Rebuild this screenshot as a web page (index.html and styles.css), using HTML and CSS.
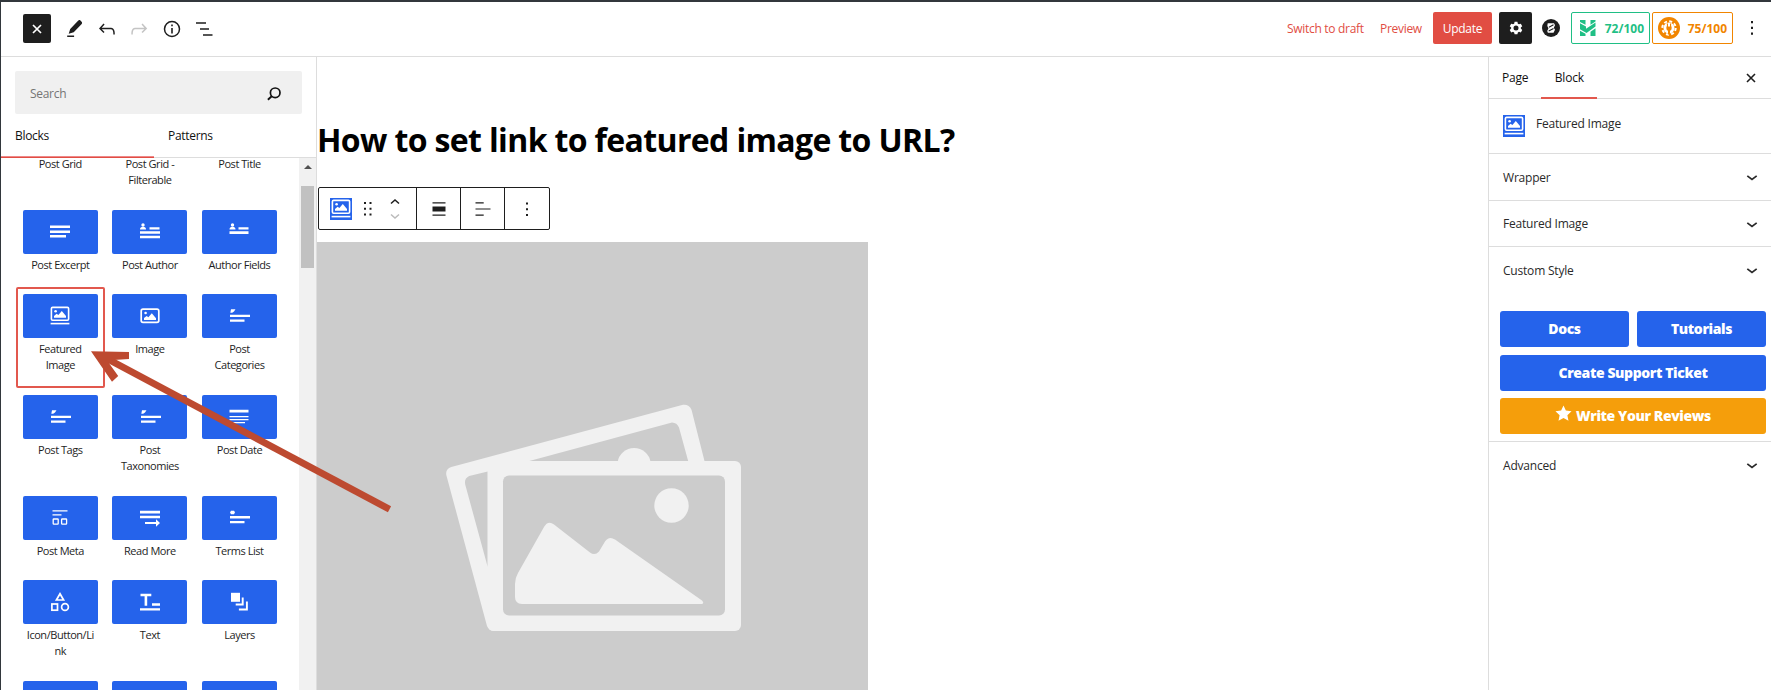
FILE: index.html
```
<!DOCTYPE html>
<html lang="en">
<head>
<meta charset="utf-8">
<title>Edit Page</title>
<link rel="stylesheet" href="styles.css">
</head>
<body>
<svg class="defs" aria-hidden="true">
  <symbol id="i-featured" viewBox="0 0 22 22"><g fill="none" stroke="currentColor" stroke-width="1.6"><rect x="2.4" y="2.4" width="17.2" height="12.8" rx="1.2"/><path d="M1.6 18.6H20.4"/></g><circle cx="6.6" cy="6.2" r="1.3" fill="currentColor"/><path fill="currentColor" d="M5 12.8V11l2.6-2.2 1.8 1.3 3.4-4 4.2 5v1.700z"/></symbol>
  <symbol id="i-image" viewBox="0 0 22 22"><rect x="2.2" y="4.2" width="17.6" height="13.2" rx="1.8" fill="none" stroke="currentColor" stroke-width="1.7"/><circle cx="6.6" cy="8" r="1.3" fill="currentColor"/><path fill="currentColor" d="M5 15v-2l2.6-2 1.8 1.2 3.4-4 4.2 5V15z"/></symbol>
  <symbol id="i-excerpt" viewBox="0 0 22 22"><path fill="currentColor" d="M1 4.500h20v2.600H1zM1 9.500h20v2.600H1zM1 14h16v2.600H1z"/></symbol>
  <symbol id="i-author" viewBox="0 0 22 22"><circle cx="4" cy="4" r="1.700" fill="currentColor"/><path fill="currentColor" d="M1 8.600q0-2.800 3-2.800t3 2.800zM10.500 6.200h10v2.300h-10zM1 10.300h20v2.500H1zM1 14.800h20v2.500H1z"/></symbol>
  <symbol id="i-fields" viewBox="0 0 22 22"><circle cx="4.500" cy="4" r="1.700" fill="currentColor"/><path fill="currentColor" d="M1.500 8.600q0-2.800 3-2.800t3 2.800zM10.500 6.200h10v2.300h-10zM1.500 10.300h19v2.700h-19z"/></symbol>
  <symbol id="i-tag" viewBox="0 0 22 22"><path fill="currentColor" d="M3 4.200h4.500L6 6.500 4.200 7.800H2.300zM2 9.700h20V12H2zM2 14.400h14.500v2.400H2z"/></symbol>
  <symbol id="i-terms" viewBox="0 0 22 22"><path fill="currentColor" d="M3 3.800h3l1 1.500-1 2H3L2 5.500zM2 9h20v2.400H2zM2 14h14.500v2.200H2z"/></symbol>
  <symbol id="i-date" viewBox="0 0 22 22"><path fill="currentColor" d="M1.500 3.800h19v2.800h-19zM1.500 10h19v1.200h-19zM1.500 13h19v1.200h-19zM5 16h12v1.200H5z"/></symbol>
  <symbol id="i-meta" viewBox="0 0 22 22"><path fill="currentColor" d="M3.500 3.200h15v1.300h-15zM3.500 7.200h9v1.200h-9z"/><g fill="none" stroke="currentColor" stroke-width="1.300"><rect x="4.200" y="12" width="5" height="5.200" rx=".6"/><rect x="12.600" y="12" width="5" height="5.200" rx=".6"/></g></symbol>
  <symbol id="i-more" viewBox="0 0 22 22"><path fill="currentColor" d="M1 3.800h20v2.800H1zM1 8.800h20v2.500H1zM6 15h11v-2.800l4 3.900-4 3.700V17H6z"/></symbol>
  <symbol id="i-shapes" viewBox="0 0 22 22"><g fill="none" stroke="currentColor" stroke-width="1.700"><path d="M11 2.800 14.600 9H7.400z"/><rect x="2.900" y="13" width="5.600" height="6.200"/><circle cx="16" cy="16" r="3.400"/></g></symbol>
  <symbol id="i-text" viewBox="0 0 22 22"><path fill="currentColor" d="M1.500 2.800h10.800v2.400H8.200v9.600H5.600V5.200H1.500zM13 12.300h8v2.400h-8zM1 17.300h20v2.300H1z"/></symbol>
  <symbol id="i-layers" viewBox="0 0 22 22"><path fill="currentColor" d="M3 1.800h9v9H3z"/><path d="M14.700 6.500v7h-7M18.900 10.500v8h-8" fill="none" stroke="currentColor" stroke-width="1.900"/></symbol>
  <symbol id="i-chev" viewBox="0 0 24 24"><path d="M7.300 10.800 12 14.500l4.700-3.700" fill="none" stroke="currentColor" stroke-width="1.700"/></symbol>
</svg>
<div class="frame">
  <header class="topbar">
    <div class="tools">
      <button class="close-inserter"><svg viewBox="0 0 28 29"><path d="m10 11 8 8m0-8-8 8"/></svg></button>
      <svg class="tool" viewBox="0 0 24 24"><path fill="currentColor" d="m19.600 4.700-1.200-1.200c-.6-.6-1.500-.5-2.100.1L8.200 12l-1.500 4.800 5-1.600 8-8.300c.5-.7.500-1.500-.1-2.200zM5.200 18.600h6.900v1.500H5.200z"/></svg>
      <svg class="tool" viewBox="0 0 24 24"><path fill="currentColor" d="M18.300 11.700c-.6-.6-1.400-.9-2.300-.9H6.700l2.900-3.300-1.100-1-4.500 5L8.500 16l1-1-2.700-2.700H16c.5 0 .9.200 1.300.5 1 1 1 3.400 1 4.500v.3h1.500v-.2c0-1.500 0-4.300-1.500-5.700z"/></svg>
      <svg class="tool dim" viewBox="0 0 24 24"><path fill="currentColor" d="M15.600 6.500l-1.100 1 2.900 3.300H8c-.9 0-1.700.3-2.300.9-1.400 1.500-1.400 4.200-1.400 5.600v.2h1.500v-.3c0-1.100 0-3.500 1-4.500.3-.3.700-.5 1.300-.5h9.200L14.500 15l1.100 1.100 4.600-4.600-4.600-5z"/></svg>
      <svg class="tool" viewBox="0 0 24 24"><circle cx="12" cy="12" r="7.500" fill="none" stroke="currentColor" stroke-width="1.500"/><path fill="currentColor" d="M11.200 11h1.600v5.500h-1.600zM11.200 7.500h1.600v1.700h-1.600z"/></svg>
      <svg class="tool" viewBox="0 0 24 24"><path fill="currentColor" d="M4 5.200h10v1.600H4zM8 11.200h9v1.600H8zM11 17.200h9.500v1.600H11z"/></svg>
    </div>
    <div class="actions">
      <a class="t draft">Switch to draft</a>
      <a class="t preview">Preview</a>
      <button class="update"><span class="t">Update</span></button>
      <button class="settings"><svg viewBox="0 0 24 24"><path fill="currentColor" fill-rule="evenodd" d="M10.300 4.500h3.400l.5 2.300 1.400.8 2.200-.8 1.700 3-1.700 1.600v1.300l1.700 1.600-1.700 3-2.200-.8-1.400.8-.5 2.300h-3.400l-.5-2.300-1.400-.8-2.200.8-1.700-3 1.700-1.600v-1.300L4.500 9.800l1.700-3 2.200.8 1.400-.8zM12 9a3 3 0 1 0 0 6 3 3 0 0 0 0-6z"/></svg></button>
      <svg class="brand" viewBox="0 0 18 18"><circle cx="9" cy="9" r="9" fill="#1e1e1e"/><path d="M5.700 4.200H12l1 2-1.200 2.500 1.200 2-1.500 3H5.900L5.200 12l1.300-2.700L5.300 7z" fill="#fff"/><path d="m7 8.200 4.500-2.400M6.700 12l4.800-2.600" stroke="#1e1e1e" stroke-width="1.100"/></svg>
      <div class="score seo"><svg viewBox="0 0 16 16"><path fill="currentColor" d="M0 0h5.500v4.800L0 2zM0 3.300l6 3.200v2.200l9.500-6.200v4L6.500 13 0 9.300zM0 10.700l5.500 3V16H0zM10.500 0h5v1.500l-5 3.300zM10.500 11.800l5-3.600V16h-5z"/></svg><span class="t">72/100</span></div>
      <div class="score read"><svg viewBox="0 0 22 22"><circle cx="11" cy="11" r="11" fill="currentColor"/><circle cx="11" cy="11" r="6.700" fill="none" stroke="#fff" stroke-width="2" stroke-dasharray="3 2.260"/><circle cx="11" cy="11" r="5.500" fill="#fff"/><path d="M8.400 9.500h5.200v2q0 2-1.600 2.300v3.700h-2v-3.700q-1.600-.3-1.600-2.300zM8.900 6.500H10v3H8.900zM12 6.500h1.100v3H12z" fill="currentColor"/></svg><span class="t">75/100</span></div>
      <svg class="kebab" viewBox="0 0 4 14"><path d="M1 0h2v2.200H1zM1 5.800h2V8H1zM1 11.500h2v2.200H1z"/></svg>
    </div>
  </header>

  <main class="body">
    <aside class="inserter">
      <div class="search"><span class="t">Search</span><svg viewBox="0 0 24 24"><circle cx="13.200" cy="10.800" r="4.800" fill="none" stroke="currentColor" stroke-width="1.700"/><path d="m9.700 14.300-3.800 3.400" stroke="currentColor" stroke-width="1.900"/></svg></div>
      <div class="tabs"><div class="tab on"><span class="t">Blocks</span></div><div class="tab"><span class="t">Patterns</span></div></div>
      <div class="listing">
        <div class="grid">
          <div class="item two"><i class="tile"></i><b>Post Grid</b></div>
          <div class="item two"><i class="tile"></i><b>Post Grid -<br>Filterable</b></div>
          <div class="item two"><i class="tile"></i><b>Post Title</b></div>
          <div class="item"><i class="tile"><svg><use href="#i-excerpt"/></svg></i><b>Post Excerpt</b></div>
          <div class="item"><i class="tile"><svg><use href="#i-author"/></svg></i><b>Post Author</b></div>
          <div class="item"><i class="tile"><svg><use href="#i-fields"/></svg></i><b>Author Fields</b></div>
          <div class="item two picked"><i class="tile"><svg><use href="#i-featured"/></svg></i><b>Featured<br>Image</b></div>
          <div class="item two"><i class="tile"><svg><use href="#i-image"/></svg></i><b>Image</b></div>
          <div class="item two"><i class="tile"><svg><use href="#i-tag"/></svg></i><b>Post<br>Categories</b></div>
          <div class="item two"><i class="tile"><svg><use href="#i-tag"/></svg></i><b>Post Tags</b></div>
          <div class="item two"><i class="tile"><svg><use href="#i-tag"/></svg></i><b>Post<br>Taxonomies</b></div>
          <div class="item two"><i class="tile"><svg><use href="#i-date"/></svg></i><b>Post Date</b></div>
          <div class="item"><i class="tile"><svg><use href="#i-meta"/></svg></i><b>Post Meta</b></div>
          <div class="item"><i class="tile"><svg><use href="#i-more"/></svg></i><b>Read More</b></div>
          <div class="item"><i class="tile"><svg><use href="#i-terms"/></svg></i><b>Terms List</b></div>
          <div class="item two"><i class="tile"><svg><use href="#i-shapes"/></svg></i><b>Icon/Button/Li<br>nk</b></div>
          <div class="item two"><i class="tile"><svg><use href="#i-text"/></svg></i><b>Text</b></div>
          <div class="item two"><i class="tile"><svg><use href="#i-layers"/></svg></i><b>Layers</b></div>
          <div class="item"><i class="tile"></i></div>
          <div class="item"><i class="tile"></i></div>
          <div class="item"><i class="tile"></i></div>
        </div>
        <div class="scrollbar"><svg viewBox="0 0 8 4"><path d="M0 4 4 0l4 4z" fill="#505050"/></svg><div class="thumb"></div></div>
      </div>
    </aside>

    <section class="canvas">
      <h1><span>How to set link to featured image to URL?</span></h1>
      <div class="block-toolbar">
        <div class="seg first">
          <svg class="chip" viewBox="0 0 22 22"><use href="#i-featured"/></svg>
          <svg class="drag" viewBox="0 0 8 14"><path d="M0 0h2v2H0zM5.500 0h2v2h-2zM0 5.800h2v2H0zM5.500 5.800h2v2h-2zM0 11.500h2v2H0zM5.500 11.500h2v2h-2z"/></svg>
          <svg class="mover" viewBox="0 0 10 22"><path d="M1 5.500 5 2l4 3.500" stroke="#1e1e1e"/><path d="m1 16.500 4 3.500 4-3.500" stroke="#bbb"/></svg>
        </div>
        <div class="seg"><svg viewBox="0 0 24 24"><path d="M5.500 5.200h13v1.300h-13zM5.500 9.500h13v5h-13zM5.500 17.500h13v1.300h-13z"/></svg></div>
        <div class="seg"><svg viewBox="0 0 24 24"><path d="M4.500 5.200h8.200v1.300H4.500zM4.500 11.400h15v1.200h-15zM4.500 17.500h8.200v1.300H4.500z"/></svg></div>
        <div class="seg last"><svg viewBox="0 0 24 24"><path d="M11 5.500h2v2h-2zM11 11.200h2v2h-2zM11 16.900h2v2h-2z"/></svg></div>
      </div>
      <svg class="placeholder" viewBox="317 242 551 448">
        <path fill="#ccc" d="M317 242h551v448H317z"/>
        <path fill="#f1f1f1" d="M446.300 475q-1-6 5-8L683 404.800q6-.7 8.500 5L705 463v20H505v148h-12q-4-.5-6-5z"/>
        <path fill="#ccc" d="M527.500 461.500 672 422.500q5 .2 7 5l9.300 34zM487.700 471.500v95.500L465.200 484.500q-1.200-6 4-8.500z"/>
        <path fill="#f1f1f1" d="M617.600 462a16.700 16.700 0 0 1 33 0z"/>
        <rect x="487.700" y="461" width="253.300" height="170" rx="6" fill="#f1f1f1"/>
        <rect x="503" y="475.500" width="222" height="140" rx="6" fill="#ccc"/>
        <path fill="#f1f1f1" d="M515 584q0-6 3-11l26-46q4-7 10-2.500l36 28q5 3.500 9-1l6-10q4-6 10-2l87 61q2.500 2.500 0 3.500H522q-7-.5-7-7z"/>
        <circle cx="671.500" cy="505.500" r="17.200" fill="#f1f1f1"/>
      </svg>
    </section>

    <aside class="inspector">
      <div class="ins-tabs"><span class="t">Page</span><span class="t cur">Block</span><svg viewBox="0 0 10 10"><path d="m1 1 8 8m0-8L1 9"/></svg></div>
      <div class="card"><svg class="chip" viewBox="0 0 22 22"><use href="#i-featured"/></svg><span class="t">Featured Image</span></div>
      <div class="panel p1"><span class="t">Wrapper</span><svg><use href="#i-chev"/></svg></div>
      <div class="panel p2"><span class="t">Featured Image</span><svg><use href="#i-chev"/></svg></div>
      <div class="panel p3"><span class="t">Custom Style</span><svg><use href="#i-chev"/></svg></div>
      <div class="links">
        <a class="btn">Docs</a><a class="btn">Tutorials</a>
        <a class="btn wide">Create Support Ticket</a>
        <a class="btn wide review"><svg viewBox="0 0 18 17"><path fill="currentColor" d="m9 0 2.500 5.400 6 .8-4.400 4.100 1.200 6L9 13.300l-5.300 3 1.200-6L.5 6.200l6-.8z"/></svg>Write Your Reviews</a>
      </div>
      <div class="panel p4"><span class="t">Advanced</span><svg><use href="#i-chev"/></svg></div>
    </aside>
  </main>
  <div class="mark m1"></div><div class="mark m2"></div>
  <svg class="arrow" viewBox="0 0 312 170"><path fill="none" stroke="#bd4a30" stroke-width="6.800" d="M309.500 159.300 22 6"/><path fill="#bd4a30" d="m11 1.300 38 .8v7L30 10.200l-1.500 2.300 9.700 13.500-6.200 5.800z"/></svg>
</div>
</body>
</html>
```

FILE: styles.css
```
* { box-sizing: border-box; }
body { margin: 0; background: #fff; font-family: "Open Sans", "Noto Sans", sans-serif; font-size: 12px; color: #1e1e1e; overflow: hidden; }
.defs { display: none; }
svg { display: block; flex: none; }
button { border: 0; padding: 0; font: inherit; }
.t { white-space: nowrap; }
.frame { position: relative; width: 1771px; height: 690px; overflow: hidden; border-top: 2px solid #32373c; border-left: 1px solid #32373c; display: flex; flex-direction: column; }

.topbar { height: 55px; border-bottom: 1px solid #ddd; display: flex; justify-content: space-between; flex: none; }
.tools { display: flex; align-items: center; padding: 0 0 1px 22px; }
.close-inserter { width: 28px; height: 29px; background: #1e1e1e; border-radius: 2px; margin-right: 11px; }
.close-inserter path { stroke: #fff; stroke-width: 1.700; }
.tool { width: 24px; height: 24px; margin-right: 8.500px; }
.dim { color: #c4c4c4; }
.actions { display: flex; align-items: center; color: #e14d43; padding-bottom: 2px; }
.draft { width: 93px; letter-spacing: -.3px; }
.preview { width: 53px; letter-spacing: -.3px; }
.update { width: 59px; height: 32px; background: #e14d43; color: #fff; border-radius: 2px; letter-spacing: -.3px; margin-right: 7px; }
.settings { width: 33px; height: 32px; background: #1e1e1e; color: #fff; border-radius: 2px; margin-right: 10px; display: grid; place-items: center; }
.settings svg { width: 20px; height: 20px; }
.brand { width: 18px; height: 18px; margin-right: 11px; }
.score { height: 32px; border: 1px solid; border-radius: 2px; display: flex; align-items: center; justify-content: space-between; font-weight: 700; font-size: 12px; padding-right: 5px; }
.seo { width: 79px; color: #1fbf85; padding-left: 8px; margin-right: 2px; }
.seo svg { width: 16px; height: 16px; }
.read { width: 81px; color: #f18500; padding-left: 5px; }
.read svg { width: 22px; height: 22px; }
.kebab { width: 4px; height: 14px; margin: 0 17px; fill: #1e1e1e; }

.body { flex: 1; display: flex; min-height: 0; }
.inserter { width: 316px; border-right: 1px solid #ddd; display: flex; flex-direction: column; flex: none; }
.search { margin: 14px 14px 0 14px; height: 43px; flex: none; background: #f0f0f0; border-radius: 2px; display: flex; align-items: center; justify-content: space-between; padding: 2px 16px 0 15px; color: #757575; letter-spacing: -.3px; }
.search svg { width: 24px; height: 24px; color: #111; }
.tabs { display: flex; height: 44px; flex: none; border-bottom: 1px solid #ddd; letter-spacing: -.3px; color: #111; }
.tab { width: 153px; padding: 13px 0 0 14px; line-height: 18px; }
.tab.on { box-shadow: inset 0 -1px #e88; margin-bottom: -1px; border-bottom: 1px solid #e14d43; }
.listing { flex: 1; min-height: 0; overflow: hidden; display: flex; margin-top: -3px; }
.grid { width: 298px; padding-left: 14.500px; margin-top: -53px; display: grid; grid-template-columns: repeat(3, 89.600px); align-content: start; flex: none; }
.item { height: 84px; padding: 7px 7.300px 0; text-align: center; }
.two { height: 101px; }
.picked { border: 2px solid #e2584e; border-radius: 2px; padding: 5px 5.300px 0; }
.tile { height: 43.500px; display: grid; place-items: center; background: #2563eb; border-radius: 2px; color: #fff; }
.tile svg { width: 22px; height: 22px; }
.item b { display: block; margin: 3.500px -6px 0; font-weight: 400; font-size: 11px; line-height: 16px; letter-spacing: -.45px; white-space: nowrap; }
.scrollbar { width: 17px; margin-top: 3px; background: #f1f1f1; display: flex; flex-direction: column; align-items: center; padding-top: 7px; }
.scrollbar svg { width: 8px; height: 4px; margin-bottom: 17px; }
.thumb { width: 13px; height: 82px; background: #c1c1c1; }

.canvas { flex: 1; min-width: 0; overflow: hidden; }
h1 { margin: 60px 0 0; height: 46px; line-height: 46px; font-size: 32px; font-weight: 700; color: #000; white-space: nowrap; letter-spacing: -.64px; }
.block-toolbar { margin: 24px 0 12px 1px; width: 232px; height: 43px; border: 1px solid #1e1e1e; border-radius: 2px; display: flex; }
.seg { width: 44px; border-right: 1px solid #1e1e1e; display: grid; place-items: center; fill: #1e1e1e; flex: none; }
.seg > svg { width: 24px; height: 24px; }
.seg.first { width: 98px; display: flex; align-items: center; padding-left: 11px; }
.seg.last { border: 0; }
.chip, .seg > .chip { background: #2563eb; color: #fff; width: 22px; height: 22px; }
.seg > .drag { width: 8px; height: 14px; margin-left: 12px; }
.seg > .mover { width: 10px; height: 22px; margin-left: 18px; fill: none; stroke-width: 1.500; }
.placeholder { width: 551px; height: 448px; }

.inspector { width: 283px; border-left: 1px solid #ddd; flex: none; color: #2a2a2a; letter-spacing: -.2px; }
.ins-tabs { height: 42px; border-bottom: 1px solid #ddd; display: flex; align-items: center; padding: 0 15px 0 13px; color: #111; }
.ins-tabs .cur { width: 56px; height: 42px; line-height: 42px; text-align: center; border-bottom: 2px solid #e2584e; margin-left: 13px; }
.ins-tabs svg { width: 10px; height: 10px; margin-left: auto; stroke: #1e1e1e; stroke-width: 1.600; }
.card { height: 55px; border-bottom: 1px solid #ddd; display: flex; padding: 16px 14px; gap: 11px; line-height: 18px; }
.card .t { display: block; }
.panel { display: flex; align-items: center; justify-content: space-between; padding: 0 7px 0 14px; border-bottom: 1px solid #ddd; }
.panel svg { width: 24px; height: 24px; }
.p1 { height: 47px; }
.p2 { height: 46px; }
.p3 { height: 46px; border: 0; }
.p4 { height: 46px; border: 0; }
.links { display: grid; grid-template-columns: 1fr 1fr; gap: 7.500px 8px; padding: 18px 5px 7px 11px; border-bottom: 1px solid #ddd; }
.btn { height: 36px; padding-bottom: 1px; border-radius: 3px; background: #2563eb; color: #fff; font-size: 14px; font-weight: 800; letter-spacing: -.4px; display: flex; align-items: center; justify-content: center; }
.wide { grid-column: 1 / 3; }
.review { background: #f59e0b; gap: 4px; }
.review svg { width: 17px; height: 17px; margin-top: -4px; }

.mark { position: absolute; left: -1px; width: 1px; background: #e14d43; }
.m1 { top: 174px; height: 8px; box-shadow: 0 9px #fff; }
.m2 { top: 196px; height: 9px; }
.arrow { position: absolute; left: 79px; top: 348px; width: 312px; height: 170px; }
```
